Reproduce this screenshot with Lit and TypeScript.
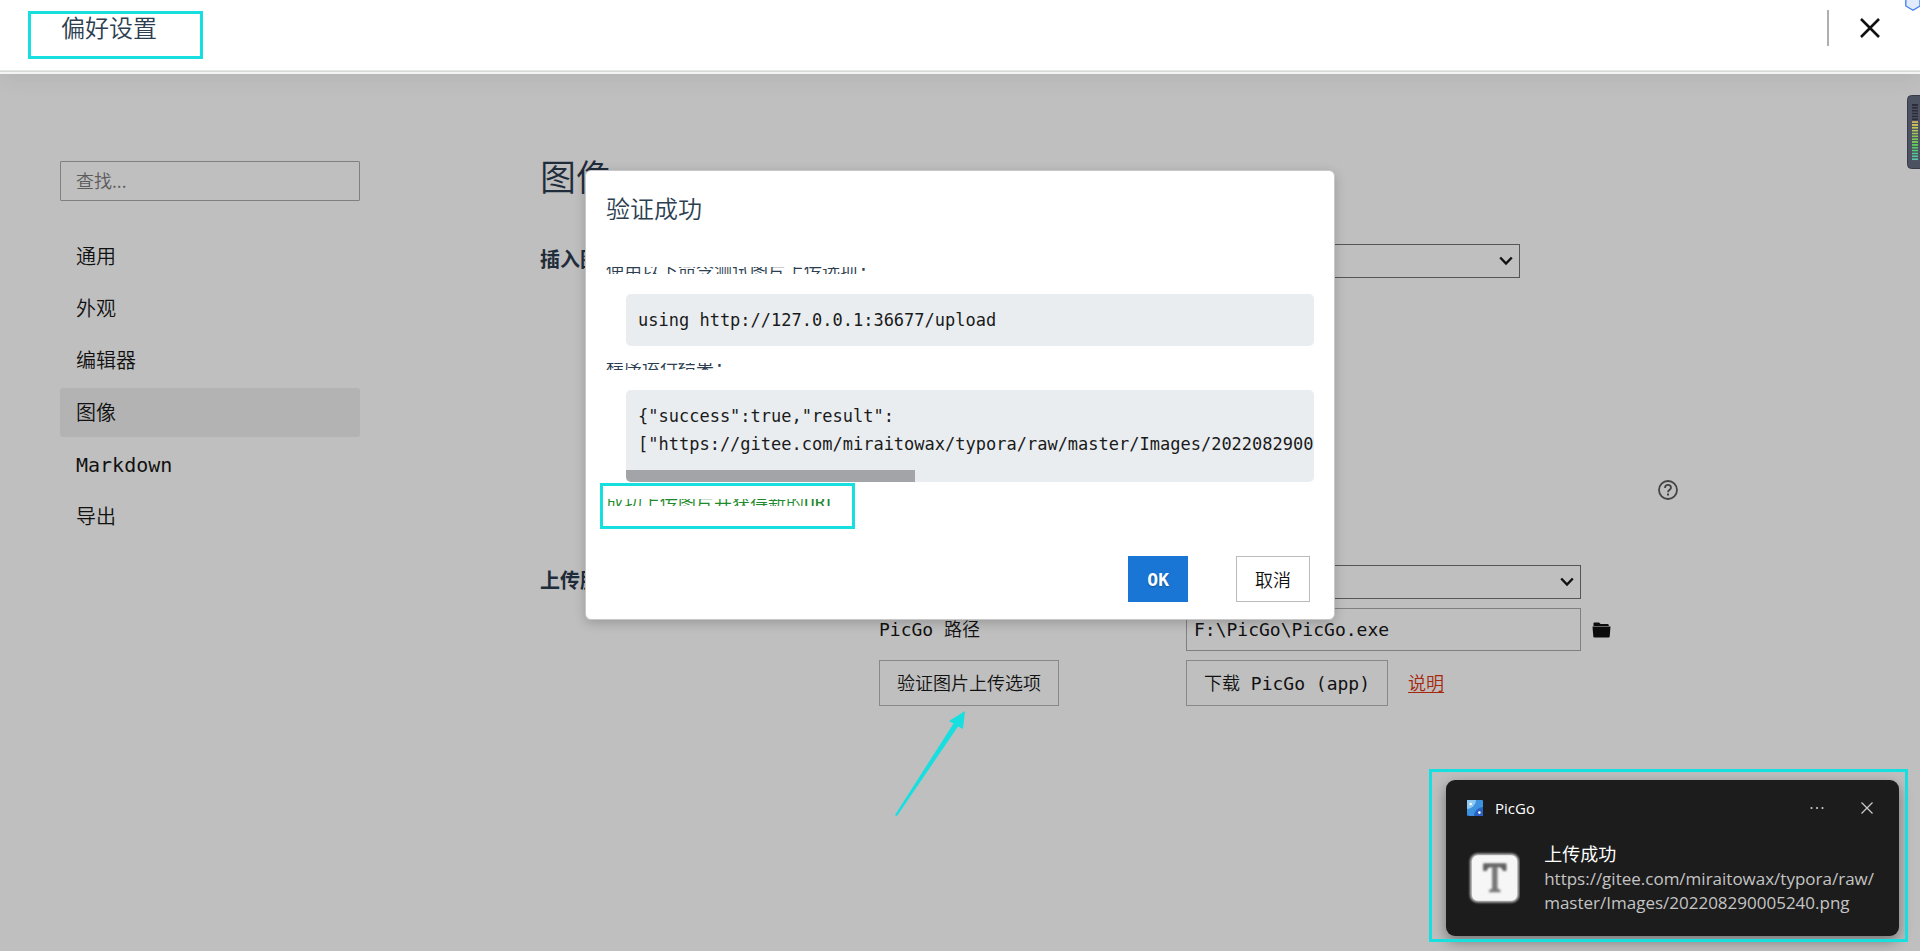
import { LitElement, html, css } from "lit";
import { customElement, property } from "lit/decorators.js";
import { classMap } from "lit/directives/class-map.js";

const NAV_ITEMS = ["通用", "外观", "编辑器", "图像", "Markdown", "导出"];

@customElement("pref-header")
class PrefHeader extends LitElement {
  static styles = css`
    :host {
      display: block;
    }
    .bar {
      display: flex;
      align-items: flex-start;
      justify-content: space-between;
      height: 71px;
      box-sizing: border-box;
      padding: 8px 39px 0 61px;
      background: #fff;
      border-bottom: 1px solid #e4e6e4;
      box-shadow: 0 1px 0 #d6dad6, 0 3px 0 #f4f4f4, 0 6px 24px rgba(0, 0, 0, 0.07);
      position: relative;
    }
    .title {
      margin: 0;
      font-size: 24px;
      line-height: 42px;
      font-weight: 350;
      color: #2c3e50;
    }
    .actions {
      display: flex;
      align-items: flex-start;
      gap: 30px;
      padding-top: 2px;
    }
    .rule {
      width: 2px;
      height: 36px;
      background: #b0b0b0;
    }
    .close {
      display: flex;
      padding: 7px 0 0;
      border: 0;
      background: none;
    }
  `;
  render() {
    return html`
      <header class="bar">
        <h1 class="title">偏好设置</h1>
        <div class="actions">
          <span class="rule"></span>
          <button class="close" aria-label="关闭">
            <svg width="22" height="22" viewBox="0 0 22 22">
              <path d="M2 2L20 20M20 2L2 20" stroke="#111" stroke-width="2.6" fill="none" />
            </svg>
          </button>
        </div>
      </header>
    `;
  }
}

@customElement("pref-sidebar")
class PrefSidebar extends LitElement {
  @property() active = "图像";
  static styles = css`
    :host {
      display: block;
    }
    .search {
      display: block;
      width: 100%;
      height: 40px;
      box-sizing: border-box;
      margin: 0 0 31px;
      padding: 0 0 2px 15px;
      border: 1px solid #808080;
      border-radius: 1px;
      background: transparent;
      font: inherit;
      font-family: "Noto Sans CJK SC", sans-serif;
      font-size: 18px;
    }
    .search::placeholder {
      color: #5c5c5c;
      opacity: 1;
    }
    .nav {
      display: flex;
      flex-direction: column;
      gap: 3px;
    }
    .item {
      padding: 1px 16px 0;
      font-size: 20px;
      line-height: 48px;
      color: #111;
      text-decoration: none;
      border-radius: 3px;
    }
    .current {
      background: #b3b3b3;
    }
  `;
  render() {
    return html`
      <input class="search" type="search" placeholder="查找..." aria-label="查找" />
      <nav class="nav">
        ${NAV_ITEMS.map(
          (name) => html`<a
            href="#"
            class=${classMap({ item: true, current: name === this.active })}
            >${name}</a
          >`
        )}
      </nav>
    `;
  }
}

@customElement("pref-select")
class PrefSelect extends LitElement {
  @property() label = "";
  static styles = css`
    :host {
      display: grid;
      align-items: center;
    }
    .select,
    .arrow {
      grid-area: 1 / 1;
    }
    .select {
      appearance: none;
      width: 100%;
      height: 34px;
      border: 1px solid #555;
      border-radius: 0;
      background: transparent;
      font: inherit;
      font-size: 18px;
    }
    .arrow {
      justify-self: end;
      margin-right: 7px;
      pointer-events: none;
    }
  `;
  render() {
    return html`
      <select class="select" aria-label=${this.label}>
        <option></option>
      </select>
      <svg class="arrow" width="14" height="10" viewBox="0 0 14 10">
        <path d="M1.2 1.5L7 7.6L12.8 1.5" fill="none" stroke="#111" stroke-width="2.4" />
      </svg>
    `;
  }
}

@customElement("pref-images")
class PrefImages extends LitElement {
  static styles = css`
    :host {
      display: block;
      color: #111;
    }
    .heading {
      margin: 0;
      padding-top: 3px;
      font-size: 36px;
      line-height: 50px;
      font-weight: 350;
      color: #1f2d3b;
    }
    .section {
      display: grid;
      grid-template-columns: 339px 307px 395px auto;
      justify-content: start;
      align-items: center;
    }
    .insert {
      margin-top: 40px;
    }
    .upload {
      margin-top: 64px;
      row-gap: 9px;
    }
    .name {
      margin: 0;
      font-size: 20px;
      line-height: 30px;
      padding-bottom: 3px;
      font-weight: 700;
      color: #1f2d3b;
    }
    .control {
      grid-column: 3;
    }
    .narrow {
      margin-right: 61px;
    }
    .help-row {
      display: flex;
      padding: 201px 0 0 1117px;
    }
    .help,
    .browse {
      display: flex;
      padding: 0;
      border: 0;
      background: none;
    }
    .browse {
      margin-left: 11px;
    }
    .label {
      grid-column: 2;
      font-size: 18px;
      padding-bottom: 3px;
    }
    .path {
      width: 100%;
      height: 43px;
      box-sizing: border-box;
      border: 1px solid #808080;
      background: transparent;
      padding: 0 7px;
      font: inherit;
      font-size: 18px;
      color: #111;
    }
    .button {
      height: 46px;
      box-sizing: border-box;
      padding: 0 17px 2px;
      border: 1px solid #888;
      background: transparent;
      font: inherit;
      font-size: 18px;
      color: #111;
      white-space: nowrap;
    }
    .verify {
      grid-column: 2;
      justify-self: start;
    }
    .download {
      display: flex;
      align-items: center;
      gap: 20px;
      font-size: 18px;
    }
    .doc {
      padding-bottom: 2px;
      color: #a6280c;
      text-underline-offset: 2px;
    }
  `;
  render() {
    return html`
      <h2 class="heading">图像</h2>
      <section class="section insert">
        <h3 class="name">插入图</h3>
        <pref-select class="control narrow" label="插入图片时"></pref-select>
      </section>
      <div class="help-row">
        <button class="help" aria-label="帮助">
          <svg width="22" height="22" viewBox="0 0 22 22" fill="none" stroke="#444">
            <circle cx="11" cy="11" r="9" stroke-width="1.8" />
            <path
              d="M8 8.9C8 7 9.3 5.9 11 5.9S14 7 14 8.7C14 10.7 11 10.8 11 13.2"
              stroke-width="1.8"
            />
            <path d="M11 14.6V16.6" stroke-width="2" />
          </svg>
        </button>
      </div>
      <section class="section upload">
        <h3 class="name">上传服</h3>
        <pref-select class="control" label="上传服务"></pref-select>
        <label class="label" for="path">PicGo 路径</label>
        <input class="path" id="path" type="text" value="F:\\PicGo\\PicGo.exe" />
        <button class="browse" aria-label="浏览">
          <svg width="19" height="16" viewBox="0 0 19 16" fill="#0c0c0c">
            <path d="M1.5 1.2Q1.5 .5 2.2 .5H7L8.6 2H15.6Q16.8 2 16.8 3.4V4H1.5Z" />
            <path d="M.5 4.6H18.5L17.7 14.4Q17.6 15.5 16.5 15.5H2.4Q1.4 15.5 1.3 14.4Z" />
          </svg>
        </button>
        <button class="button verify">验证图片上传选项</button>
        <div class="download">
          <button class="button">下载 PicGo (app)</button>
          <a class="doc" href="#">说明</a>
        </div>
      </section>
    `;
  }
}

@customElement("verify-dialog")
class VerifyDialog extends LitElement {
  static styles = css`
    :host {
      display: block;
    }
    .dialog {
      box-sizing: border-box;
      padding: 23px 20px 17px;
      background: #fff;
      border: 1px solid #c8c8c8;
      border-radius: 6px;
      box-shadow: 0 3px 12px rgba(0, 0, 0, 0.2);
      color: #2c3e50;
    }
    .title {
      margin: 0 0 41px;
      font-size: 24px;
      line-height: 32px;
      font-weight: 350;
    }
    .note {
      height: 7px;
      margin: 0;
      overflow: hidden;
      font-size: 18px;
      line-height: 7px;
    }
    .good {
      color: #1f8a2b;
    }
    .block {
      margin: 20px 0 17px 20px;
      border-radius: 5px;
      background: #e9edf0;
      overflow: hidden;
    }
    .code {
      margin: 0;
      padding: 12px;
      font: inherit;
      font-size: 17px;
      line-height: 28px;
      color: #1a1a1a;
      overflow: hidden;
    }
    .thumb {
      width: 42%;
      height: 12px;
      background: #a3a4a8;
    }
    .buttons {
      display: flex;
      justify-content: flex-end;
      gap: 48px;
      margin-top: 50px;
      padding-right: 4px;
    }
    .button {
      height: 46px;
      box-sizing: border-box;
      padding: 0 18px;
      border: 1px solid #bbb;
      background: #fff;
      font: inherit;
      font-size: 18px;
      color: #111;
    }
    .primary {
      border-color: #1976d5;
      background: #1976d5;
      color: #fff;
      font-weight: 700;
      text-shadow: 0 1px 2px rgba(0, 0, 0, 0.3);
    }
  `;
  render() {
    return html`
      <div class="dialog" role="dialog" aria-labelledby="title">
        <h2 class="title" id="title">验证成功</h2>
        <p class="note">使用以下命令测试图片上传选项:</p>
        <div class="block"><pre class="code">using http://127.0.0.1:36677/upload</pre></div>
        <p class="note">程序运行结果:</p>
        <div class="block">
          <pre class="code">{"success":true,"result":
["https://gitee.com/miraitowax/typora/raw/master/Images/202208290005240.png"]}</pre>
          <div class="thumb"></div>
        </div>
        <p class="note good">成功上传图片并获得新的URL</p>
        <div class="buttons">
          <button class="button primary">OK</button>
          <button class="button">取消</button>
        </div>
      </div>
    `;
  }
}

@customElement("toast-card")
class ToastCard extends LitElement {
  static styles = css`
    :host {
      display: block;
      font-family: "Open Sans", "Noto Sans CJK SC", sans-serif;
      font-weight: 400;
    }
    .card {
      box-sizing: border-box;
      padding: 17px 25px 21px 21px;
      border-radius: 9px;
      background: #1c1c1c;
      color: #fff;
      box-shadow: 0 5px 14px rgba(0, 0, 0, 0.4);
    }
    .top {
      display: flex;
      align-items: center;
      line-height: 22px;
    }
    .app {
      flex: 1;
      margin-left: 12px;
      font-size: 15px;
    }
    .icon {
      display: flex;
      padding: 0;
      border: 0;
      background: none;
    }
    .more {
      margin-right: 36px;
    }
    .body {
      display: flex;
      align-items: flex-start;
      gap: 24px;
      margin-top: 22px;
    }
    .text {
      font-size: 17px;
      line-height: 24px;
    }
    .head,
    .url {
      margin: 0;
    }
    .head {
      font-size: 18px;
      line-height: 26px;
    }
    .url {
      color: #c4c4c4;
    }
    .logo {
      margin-top: 10px;
    }
  `;
  render() {
    return html`
      <div class="card" role="status">
        <div class="top">
          <svg width="16" height="16" viewBox="0 0 16 16">
            <rect width="16" height="16" rx="1" fill="#3d93e0" />
            <path d="M0 0H9A9 9 0 0 1 0 9Z" fill="#8cc8f2" />
            <path d="M16 7V16H7A9 9 0 0 1 16 7Z" fill="#2a62c4" />
            <path d="M0 14.500L3 16H0Z" fill="#2a62c4" />
            <circle cx="3.7" cy="4" r="1.3" fill="#fff" />
            <circle cx="12.4" cy="12.6" r="1.3" fill="#fff" />
          </svg>
          <span class="app">PicGo</span>
          <button class="icon more" aria-label="更多">
            <svg width="14" height="4" viewBox="0 0 14 4" fill="#c8c8c8">
              <circle cx="1.5" cy="2" r="1.1" />
              <circle cx="7" cy="2" r="1.1" />
              <circle cx="12.5" cy="2" r="1.1" />
            </svg>
          </button>
          <button class="icon" aria-label="关闭通知">
            <svg width="14" height="14" viewBox="0 0 14 14">
              <path d="M1.5 1.5L12.5 12.5M12.5 1.5L1.5 12.5" stroke="#ccc" stroke-width="1.2" />
            </svg>
          </button>
        </div>
        <div class="body">
          <svg class="logo" width="54" height="54" viewBox="0 0 54 54">
            <defs>
              <filter id="soft" x="-20%" y="-20%" width="140%" height="140%">
                <feGaussianBlur stdDeviation="1.2" />
              </filter>
            </defs>
            <rect x="3" y="2" width="50" height="50" rx="8" fill="#bbb" filter="url(#soft)" />
            <rect x="5" y="4" width="46" height="46" rx="6" fill="#f6f6f6" />
            <g filter="url(#soft)" fill="#777">
              <path d="M16.5 12H40V20H36.5Q36 16 32 16H31V37Q31 39 34 39V41.5H22.500V39Q25.500 39 25.500 37V16H24.500Q20.500 16 20 20H16.500Z" />
            </g>
            <path d="M17 13H39.500V19H37Q36 15 33 15H23.500Q20.500 15 19.500 19H17Z" fill="#444" opacity=".5" filter="url(#soft)" />
          </svg>
          <div class="text">
            <p class="head">上传成功</p>
            <p class="url">https://gitee.com/miraitowax/typora/raw/<br />master/Images/202208290005240.png</p>
          </div>
        </div>
      </div>
    `;
  }
}

@customElement("app-root")
class AppRoot extends LitElement {
  static styles = css`
    :host {
      display: block;
      position: relative;
      min-height: 100vh;
      overflow: hidden;
      background: #bfbfbf;
      font-family: "DejaVu Sans Mono", "Noto Sans CJK SC", monospace;
      font-weight: 350;
    }
    .page {
      display: grid;
      grid-template-columns: 300px 1fr;
      column-gap: 180px;
      padding: 80px 60px 0;
    }
    .side {
      margin-top: 10px;
    }
    .overlay {
      position: absolute;
      inset: 0;
      display: flex;
      justify-content: center;
      align-items: flex-start;
      padding-top: 170px;
    }
    .dialog {
      width: 750px;
    }
    .toast {
      position: absolute;
      right: 21px;
      bottom: 15px;
      width: 453px;
    }
    .mark {
      position: absolute;
      box-sizing: border-box;
      border: 3px solid #18dfdf;
      pointer-events: none;
    }
    .mark-title {
      left: 28px;
      top: 11px;
      width: 175px;
      height: 48px;
    }
    .mark-result {
      left: 15px;
      top: 313px;
      width: 255px;
      height: 46px;
    }
    .mark-toast {
      inset: -11px -9px -6px -17px;
    }
    .anchor {
      position: relative;
    }
    .pointer {
      position: absolute;
      left: 894px;
      top: 710px;
    }
    .meter {
      position: absolute;
      right: 0;
      top: 95px;
    }
    .shield {
      position: absolute;
      right: 0;
      top: 0;
    }
  `;
  render() {
    const bars = Array.from({ length: 20 }, (_, i) => i);
    const fill = (i: number) =>
      i < 6 ? "#2b2d38" : `hsl(${46 + (i - 6) * 9}, 52%, 57%)`;
    return html`
      <pref-header></pref-header>
      <main class="page">
        <pref-sidebar class="side"></pref-sidebar>
        <pref-images></pref-images>
      </main>
      <svg class="pointer" width="74" height="108" viewBox="0 0 74 108">
        <path d="M71 1L55 11L59.500 13.500L1 105L3 106L64 16.500L69 19Z" fill="#18dfdf" />
      </svg>
      <div class="overlay">
        <div class="dialog anchor">
          <verify-dialog></verify-dialog>
          <div class="mark mark-result"></div>
        </div>
      </div>
      <div class="mark mark-title"></div>
      <svg class="shield" width="15" height="12" viewBox="0 0 15 12">
        <path d="M.8 -2V6L8 10.300L15 6V-2Z" fill="#e2ebfd" stroke="#3f7ff0" stroke-width="1.300" />
      </svg>
      <svg class="meter" width="13" height="74" viewBox="0 0 13 74">
        <rect x=".5" y=".5" width="20" height="73" rx="4" fill="#4d5263" stroke="#383b48" />
        ${bars.map(
          (i) => html`<svg x="5" y=${9 + i * 2.85} width="6" height="2">
            <rect width="6" height="2" fill=${fill(i)} />
          </svg>`
        )}
      </svg>
      <div class="toast">
        <toast-card></toast-card>
        <div class="mark mark-toast"></div>
      </div>
    `;
  }
}
